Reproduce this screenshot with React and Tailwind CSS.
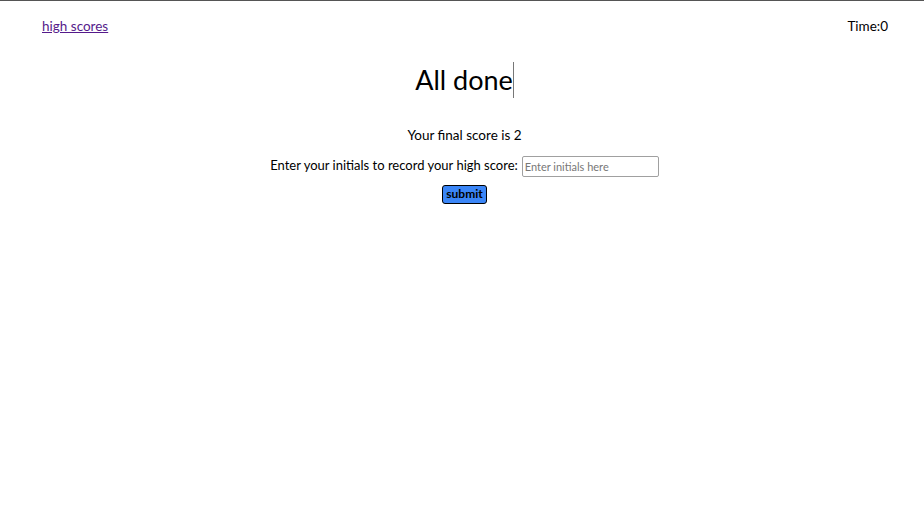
import React from "react";

const App = () => {
  return (
    <div
      className="min-h-[519px] bg-white border-t border-[#555555] text-black"
      style={{ fontFamily: 'Lato, sans-serif' }}
    >
      <header className="flex items-center justify-between px-[42px] pt-[15px]">
        <a href="#" className="text-[13.5px] text-[#551a8b] underline">
          high scores
        </a>
        <span className="text-[13.5px] mr-[-6px]">Time:0</span>
      </header>
      <main className="flex flex-col items-center pl-[5px]">
        <div className="mt-[26px] flex items-center">
          <h1 className="text-[27px] leading-[36px]">All done</h1>
          <span className="w-px h-[36px] bg-[#777777]"></span>
        </div>
        <p className="mt-[27px] text-[13.5px]">Your final score is 2</p>
        <div className="mt-[10px] flex items-center gap-[4px] text-[13px]">
          <label>Enter your initials to record your high score:</label>
          <input
            type="text"
            placeholder="Enter initials here"
            className="w-[137px] h-[21px] border border-[#a0a0a0] rounded-[2px] px-[2px] text-[11px] placeholder:text-[#777777]"
          />
        </div>
        <button className="mt-[8px] w-[45px] h-[19px] bg-[#3b86f7] border border-black rounded-[3px] text-[12px] font-bold leading-none">
          submit
        </button>
      </main>
    </div>
  );
};

export default App;
